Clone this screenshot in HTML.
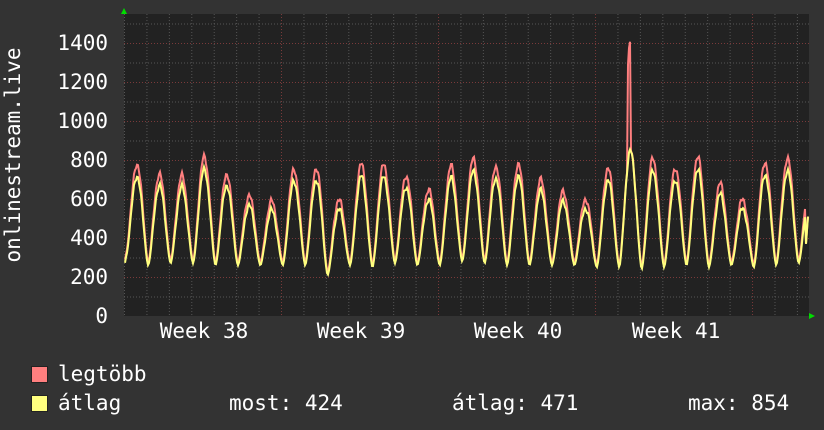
<!DOCTYPE html>
<html><head><meta charset="utf-8"><style>
html,body{margin:0;padding:0;background:#333333;}
svg{display:block}
text{font-family:"DejaVu Sans Mono","Liberation Mono",monospace;fill:#fff;font-size:21px}
</style></head><body>
<svg id="s" width="824" height="430" xmlns="http://www.w3.org/2000/svg">
<rect width="824" height="430" fill="#333333"/>
<rect x="124" y="14" width="685" height="302" fill="#222222"/>
<g id="grid"></g>
<g id="data"></g>
<polygon points="121,14 127,14 124,8" fill="#00dd00"/>
<polygon points="809,313 809,319 815,316" fill="#00dd00"/>
<g text-anchor="end">
<text x="108" y="50">1400</text>
<text x="108" y="89">1200</text>
<text x="108" y="128">1000</text>
<text x="108" y="167">800</text>
<text x="108" y="206">600</text>
<text x="108" y="245">400</text>
<text x="108" y="284">200</text>
<text x="108" y="323">0</text>
</g>
<text x="20" y="155" text-anchor="middle" transform="rotate(-90 20 155)">onlinestream.live</text>
<g text-anchor="middle">
<text x="204" y="338">Week 38</text>
<text x="361" y="338">Week 39</text>
<text x="518" y="338">Week 40</text>
<text x="676" y="338">Week 41</text>
</g>
<rect x="31.5" y="366.5" width="16" height="16" fill="#ff7f7f" stroke="#222" />
<rect x="31.5" y="395.5" width="16" height="16" fill="#ffff7f" stroke="#222" />
<text x="58" y="381">legtöbb</text>
<text x="58" y="410">átlag</text>
<text x="229" y="410">most: 424</text>
<text x="452" y="410">átlag: 471</text>
<text x="688" y="410">max: 854</text>
</svg>
<script>
var ns="http://www.w3.org/2000/svg",g=document.getElementById('grid'),d=document.getElementById('data');
function ln(x1,y1,x2,y2,c){var l=document.createElementNS(ns,'line');l.setAttribute('x1',x1);l.setAttribute('y1',y1);l.setAttribute('x2',x2);l.setAttribute('y2',y2);l.setAttribute('stroke',c);l.setAttribute('stroke-dasharray','1,2');g.appendChild(l);}
for(var v=100;v<=1500;v+=100){var y=316-v*0.195+0.5;ln(124,y,809,y,v%200==0?'#7a3a3a':'#555');}
for(var i=0;i<31;i++){var x=124.5+i*22.43;var maj=(i%7==0&&i>0);ln(x,14,x,316,maj?'#7a3a3a':'#555');}
var pk=[780,730,720,820,730,620,590,750,760,600,780,780,720,650,770,810,770,780,700,640,600,760,1400,810,760,820,680,600,790,810,700];
var tr=[300,260,270,270,260,260,260,260,260,210,260,250,270,260,260,280,270,260,260,260,260,250,250,240,250,260,250,260,250,260,270];
function val(x,sc,off){var t=(x-137)/22.43;var k=Math.max(0,Math.min(pk.length-1,Math.round(t)));
var ph=t-Math.round(t);var c=(1+Math.cos(ph*2*Math.PI))/2;c=Math.pow(c,0.8);
var p=pk[k],trv=(ph<0?tr[k]:tr[Math.min(k+1,tr.length-1)]);
if(p>1000){p=sc<1?920:(Math.abs(x-629)<1.2?1400:850);}
var n=Math.sin(x*1.7)*10+Math.sin(x*0.63)*8;
var v=trv+off+(p*sc-trv-off)*c+n*c;
if(x>=806)v=300+(x-805)*70;
return v;}
function path(sc,off,col){var s='';for(var x=125;x<=808;x++){var v=val(x,sc,off);s+=(x==125?'M':'L')+x+','+(316-v*0.195).toFixed(1);}
var p=document.createElementNS(ns,'path');p.setAttribute('d',s);p.setAttribute('fill','none');p.setAttribute('stroke',col);p.setAttribute('stroke-width','2');d.appendChild(p);}
path(1,15,'#ff7f7f');path(0.92,0,'#ffff7f');
</script>
</body></html>
